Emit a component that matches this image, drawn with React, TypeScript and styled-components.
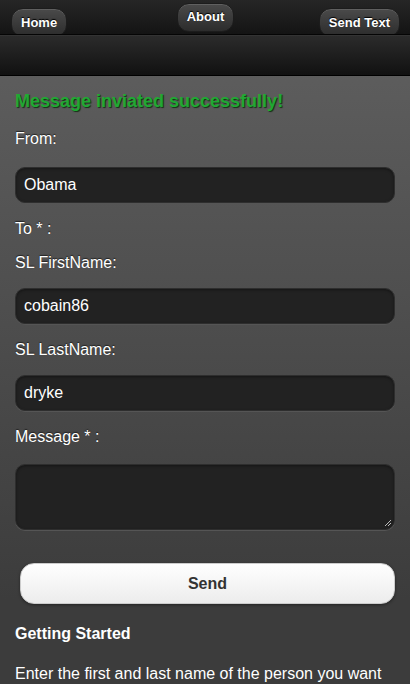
import React from 'react'
import styled, { createGlobalStyle } from 'styled-components'

const GlobalStyle = createGlobalStyle`
    html, body {
        margin: 0;
        padding: 0;
        background: #3a3a3a;
    }
    body {
        font-family: 'Liberation Sans', Arial, sans-serif;
        overflow: hidden;
    }
`

const Page = styled.div`
    width: 410px;
    height: 684px;
    overflow: hidden;
    display: flex;
    flex-direction: column;
    background: linear-gradient(#616161 0px, #3c3c3c 600px);
`

const NavBar = styled.div`
    height: 34px;
    display: grid;
    grid-template-columns: 1fr auto 1fr;
    padding: 0 10px 0 11px;
    background: linear-gradient(#262626, #141414);
    border-bottom: 1px solid #050505;
    overflow: hidden;
`

const NavButton = styled.div<{ raised?: boolean; side?: 'left' | 'right' }>`
    justify-self: ${(props) =>
        props.side === 'left' ? 'start' : props.side === 'right' ? 'end' : 'center'};
    align-self: start;
    margin-top: ${(props) => (props.raised ? '3px' : '8px')};
    height: 29px;
    padding: 0 9px;
    display: flex;
    align-items: ${(props) => (props.raised ? 'center' : 'flex-start')};
    padding-top: ${(props) => (props.raised ? '0' : '6px')};
    padding-bottom: ${(props) => (props.raised ? '2px' : '0')};
    box-sizing: border-box;
    border-radius: 12px;
    border: 1px solid #1c1c1c;
    background: linear-gradient(#4a4a4a, #2c2c2c);
    box-shadow: inset 0 1px 0 rgba(255, 255, 255, 0.12);
    color: #fff;
    font-weight: bold;
    font-size: 13px;
    text-shadow: 0 -1px 1px #000;
`

const SubBar = styled.div`
    height: 40px;
    background: linear-gradient(#2b2b2b, #111);
    border-top: 1px solid #333;
    border-bottom: 1px solid #000;
`

const Content = styled.div`
    display: flex;
    flex-direction: column;
    padding: 15px 15px 0 15px;
    color: #fff;
    font-size: 16px;
`

const Status = styled.div`
    line-height: 20px;
    margin-bottom: 17px;
    font-size: 18px;
    font-weight: bold;
    color: #20a834;
    text-shadow: 1px 1px 1px #143214;
`

const Label = styled.div<{ gapBelow: number }>`
    line-height: 20px;
    padding-top: 1px;
    margin-bottom: ${(props) => props.gapBelow - 1}px;
    text-shadow: 0 -1px 1px #222;
`

const TextInput = styled.div<{ tall?: boolean }>`
    height: ${(props) => (props.tall ? '66px' : '36px')};
    box-sizing: border-box;
    margin-bottom: 15px;
    padding: 0 8px;
    display: flex;
    align-items: center;
    border-radius: 10px;
    border: 1px solid #2e2e2e;
    background: #222;
    box-shadow: inset 0 1px 3px rgba(0, 0, 0, 0.4), 0 1px 0 #555;
    font-size: 16px;
    color: #fff;
    position: relative;
`

const Grip = styled.svg`
    position: absolute;
    right: 2px;
    bottom: 2px;
`

const SendButton = styled.div`
    margin: 18px 0 0 5px;
    height: 41px;
    box-sizing: border-box;
    display: flex;
    align-items: center;
    justify-content: center;
    border-radius: 14px;
    border: 1px solid #ccc;
    background: linear-gradient(#fff, #ececec);
    box-shadow: 0 1px 3px rgba(0, 0, 0, 0.4);
    color: #333;
    font-weight: bold;
    font-size: 16px;
`

const Heading = styled.div`
    margin-top: 20px;
    line-height: 20px;
    font-weight: bold;
    font-size: 16px;
`

const Paragraph = styled.p`
    margin: 20px 0 0;
    line-height: 20px;
    font-size: 16px;
    white-space: nowrap;
`

export default function App() {
    return (
        <Page>
            <GlobalStyle />
            <NavBar>
                <NavButton side="left">Home</NavButton>
                <NavButton raised>About</NavButton>
                <NavButton side="right">Send Text</NavButton>
            </NavBar>
            <SubBar />
            <Content>
                <Status>Message inviated successfully!</Status>
                <Label gapBelow={19}>From:</Label>
                <TextInput>Obama</TextInput>
                <Label gapBelow={14}>To * :</Label>
                <Label gapBelow={16}>SL FirstName:</Label>
                <TextInput>cobain86</TextInput>
                <Label gapBelow={16}>SL LastName:</Label>
                <TextInput>dryke</TextInput>
                <Label gapBelow={18}>Message * :</Label>
                <TextInput tall>
                    <Grip width="9" height="9" viewBox="0 0 9 9">
                        <path d="M8 2 L2 8 M8 5 L5 8" stroke="#bbb" strokeWidth="1" />
                    </Grip>
                </TextInput>
                <SendButton>Send</SendButton>
                <Heading>Getting Started</Heading>
                <Paragraph>Enter the first and last name of the person you want</Paragraph>
            </Content>
        </Page>
    )
}
